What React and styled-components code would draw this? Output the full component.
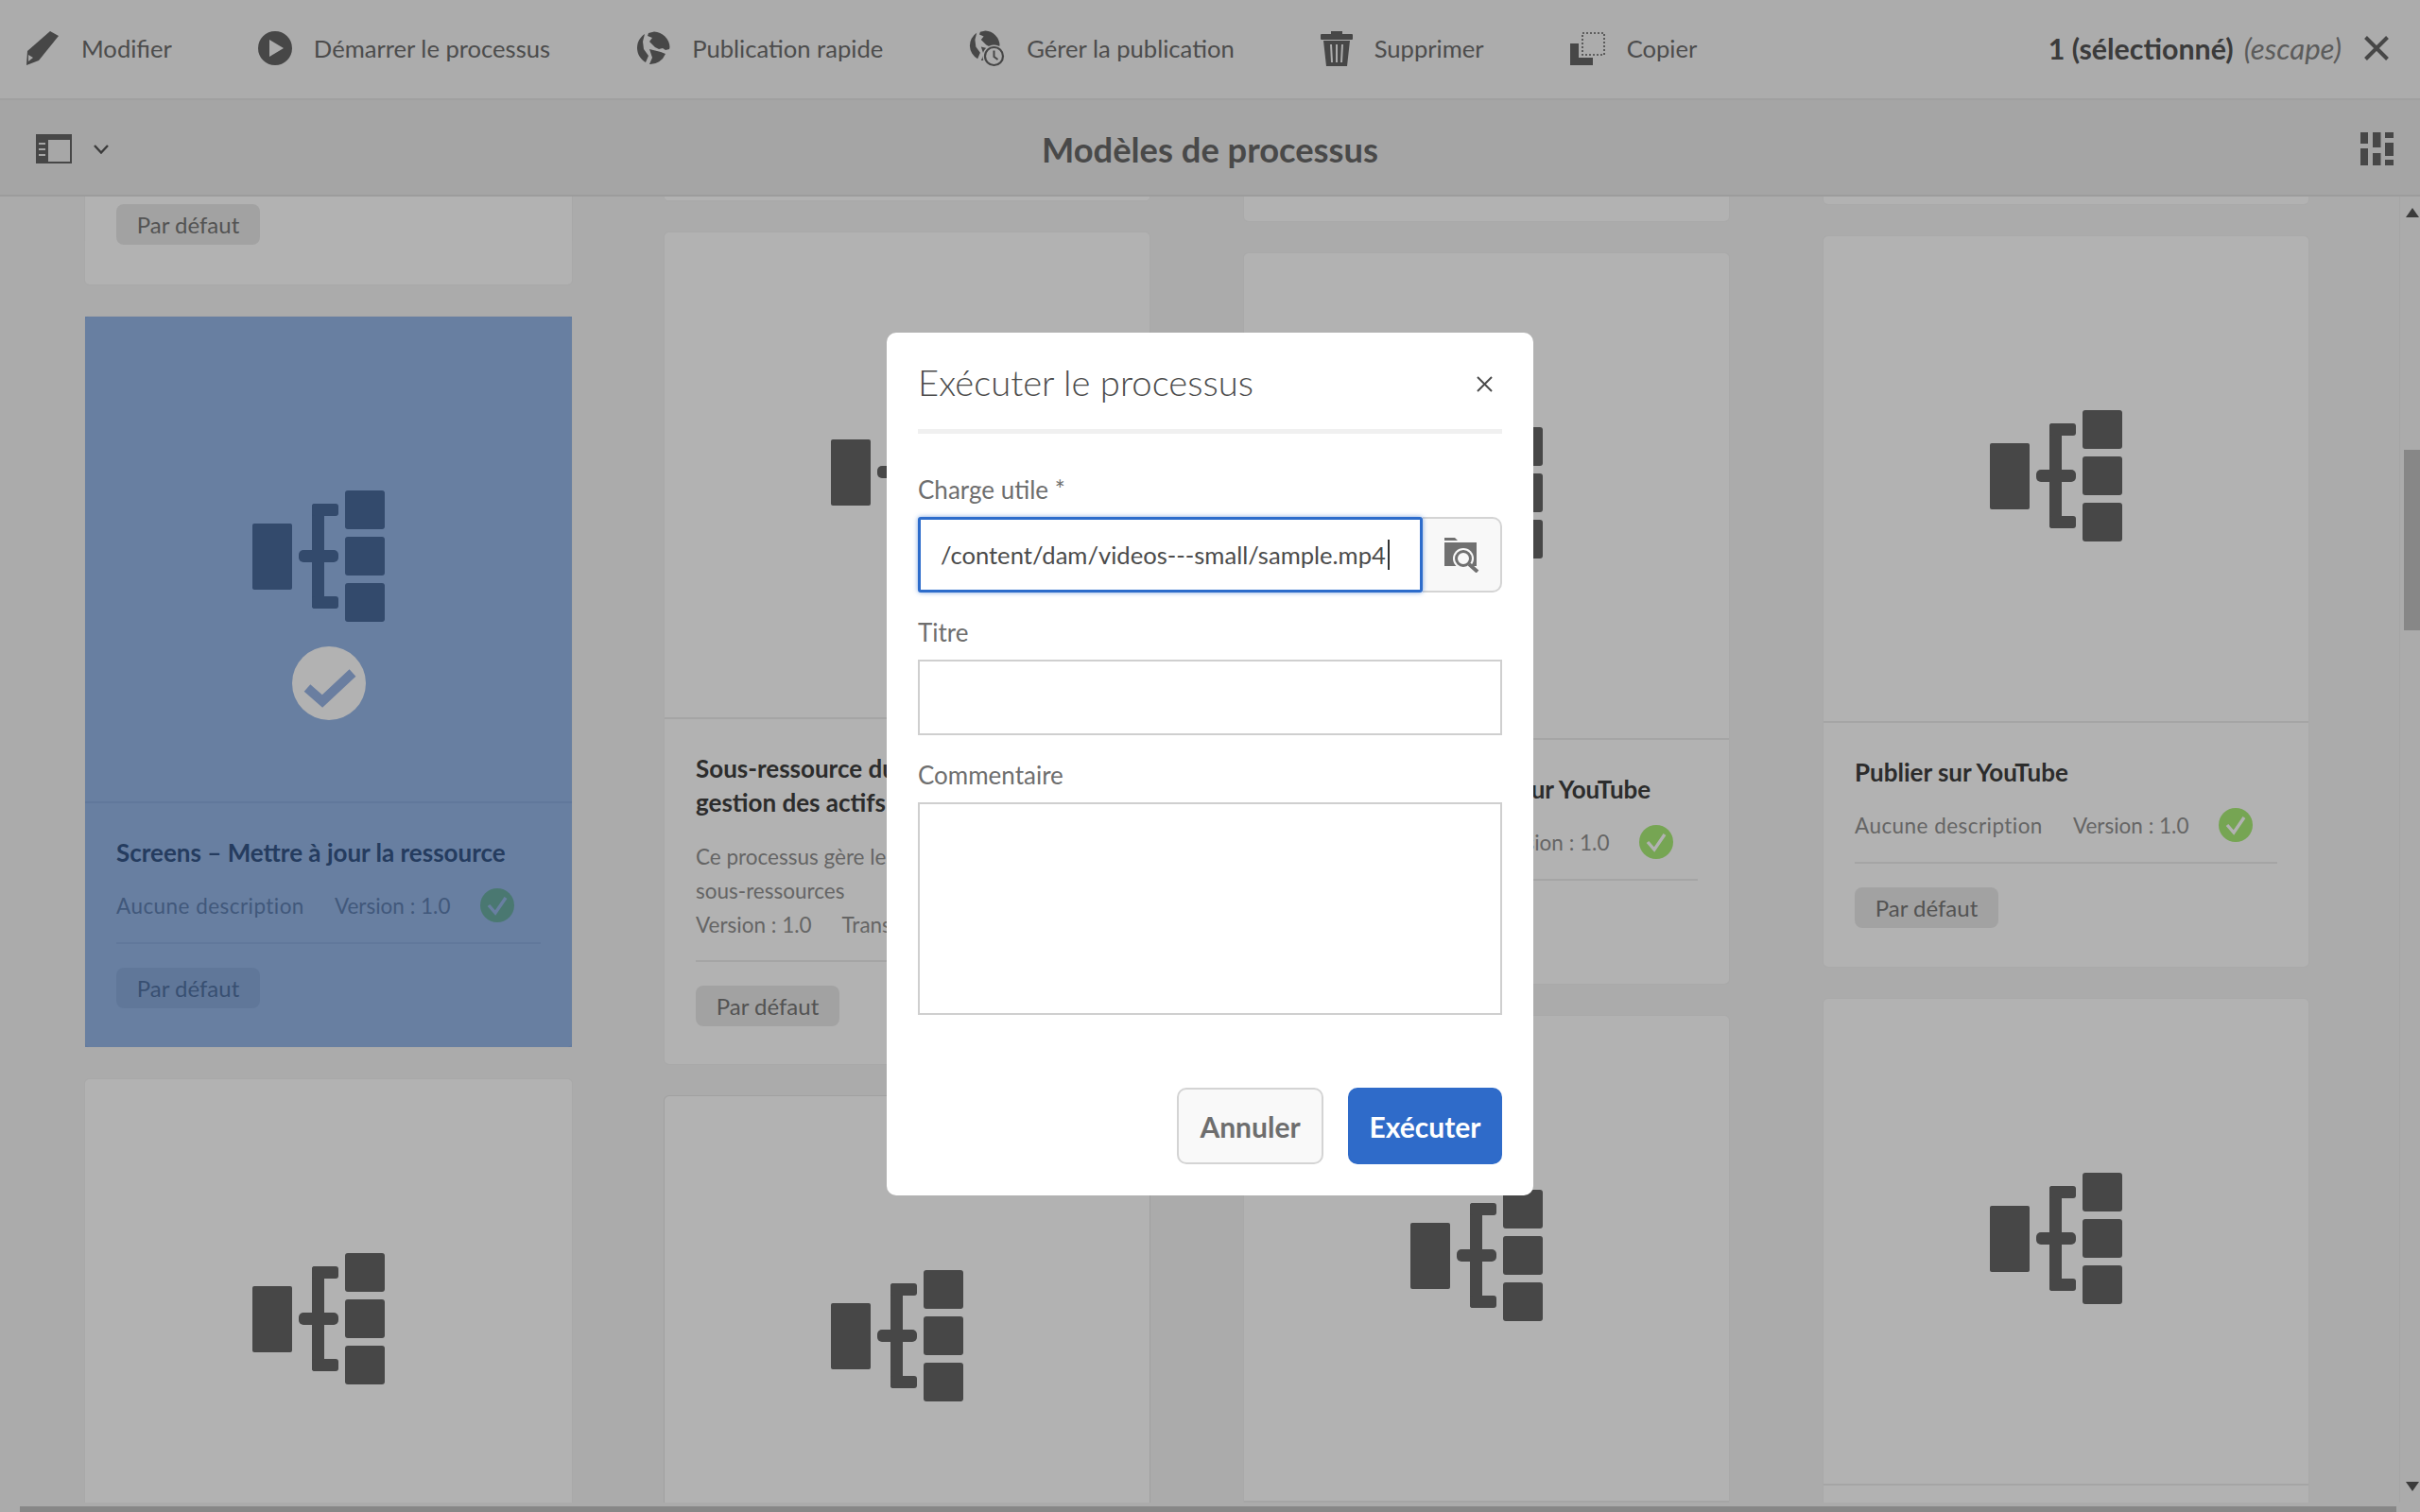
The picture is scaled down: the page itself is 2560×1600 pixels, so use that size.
import React from 'react'
import styled, { createGlobalStyle } from 'styled-components'

const GlobalStyle = createGlobalStyle`
    html, body {
        margin: 0;
        height: 100%;
        overflow: hidden;
        background: #f5f5f5;
        font-family: Lato, "Noto Sans", sans-serif;
    }
    * {
        box-sizing: border-box;
    }
`

const PencilIcon = () => (
    <svg width="36" height="36" viewBox="0 0 36 36">
        <path d="M26 0 L35 5 L14 31 L1 36 L2 21 Z" fill="#666" />
        <path d="M3 25 L8 28 L3 32 Z" fill="#f0f0f0" />
    </svg>
)

const PlayIcon = () => (
    <svg width="36" height="36" viewBox="0 0 36 36">
        <path
            fillRule="evenodd"
            d="M18 0a18 18 0 1 1 0 36a18 18 0 1 1 0-36z M12 9v18l15-9z"
            fill="#666"
        />
    </svg>
)

const GlobeIcon = ({ size = 36 }) => (
    <svg width={size} height={size} viewBox="0 0 36 36" fill="#666">
        <path d="M13 2 L19 0.5 A17.5 17.5 0 0 1 35.5 17 L35 19 L31 20 L28 18 L24 19 L20 17 L14 11 L17 7 L12 5 Z" />
        <path d="M9 3 A17.5 17.5 0 0 0 10 33 L13 26 L8 19 L7 11 Z" />
        <path d="M14 19 L26 22 L31 24 A17.5 17.5 0 0 1 14 35 L17 28 Z" />
    </svg>
)

const GlobeClock = styled.span`
    position: relative;
    display: block;
    width: 38px;
    height: 38px;
    svg {
        display: block;
    }
    svg + svg {
        position: absolute;
        right: -1px;
        bottom: -2px;
    }
`

const ManageIcon = () => (
    <GlobeClock>
        <GlobeIcon size={33} />
        <svg width="25" height="25" viewBox="0 0 25 25">
            <circle cx="12.5" cy="12.5" r="12" fill="#f6f6f6" />
            <circle cx="12.5" cy="12.5" r="9.5" fill="#f6f6f6" stroke="#666" strokeWidth="2.2" />
            <path d="M12.5 6.5v6.5l4 3" fill="none" stroke="#666" strokeWidth="2" />
        </svg>
    </GlobeClock>
)

const TrashIcon = () => (
    <svg width="34" height="37" viewBox="0 0 34 37">
        <path d="M11 0h12v4H11z" fill="#666" />
        <rect x="0" y="3" width="34" height="6" rx="1" fill="#666" />
        <path
            fillRule="evenodd"
            d="M3 10h28l-3 27H6z M10 14l1 19h2l-1-19z M16 14v19h2V14z M22 14l-1 19h2l1-19z"
            fill="#666"
        />
    </svg>
)

const CopyIcon = () => (
    <svg width="37" height="35" viewBox="0 0 37 35">
        <path d="M0 12h9v15h15v8H0z" fill="#666" />
        <rect x="13" y="1" width="23" height="23" fill="none" stroke="#666" strokeWidth="1.6" strokeDasharray="2 2" />
    </svg>
)

const CloseIcon = ({ size = 26, weight = 4, color = '#666' }) => (
    <svg width={size} height={size} viewBox="0 0 26 26">
        <path d="M1.5 1.5L24.5 24.5M24.5 1.5L1.5 24.5" stroke={color} strokeWidth={weight} fill="none" />
    </svg>
)

const RailIcon = () => (
    <svg width="38" height="31" viewBox="0 0 38 31">
        <rect x="0" y="0" width="38" height="31" fill="#666" />
        <rect x="13" y="6" width="23" height="23" fill="#f0f0f0" />
        <path d="M3 9h7v2H3zM3 15h7v2H3zM3 21h7v2H3z" fill="#f0f0f0" />
    </svg>
)

const ChevronIcon = () => (
    <svg width="16" height="10" viewBox="0 0 16 10">
        <path d="M1 1l7 7.5L15 1" fill="none" stroke="#555" strokeWidth="2.4" />
    </svg>
)

const MasonryIcon = () => (
    <svg width="35" height="35" viewBox="0 0 35 35" fill="#666">
        <path d="M0 0h8v12H0zM0 17h8v18H0z" />
        <path d="M13 0h8.5v16H13zM13 22h8.5v13H13z" />
        <path d="M26 0h9v6h-9zM26 11h9v14h-9zM26 29h9v6h-9z" />
    </svg>
)

const WorkflowIcon = () => (
    <svg width="140" height="139" viewBox="0 0 140 139" fill="#666">
        <rect x="0" y="35" width="42" height="70" rx="2" />
        <rect x="98" y="0" width="42" height="41" rx="3" />
        <rect x="98" y="49" width="42" height="41" rx="3" />
        <rect x="98" y="98" width="42" height="41" rx="3" />
        <rect x="63" y="14" width="13" height="111" rx="3" />
        <rect x="63" y="14" width="28" height="13" rx="3" />
        <rect x="49" y="63" width="42" height="13" rx="5" />
        <rect x="63" y="112" width="28" height="13" rx="3" />
    </svg>
)

const ValidIcon = () => (
    <svg width="36" height="36" viewBox="0 0 36 36">
        <circle cx="18" cy="18" r="18" fill="#a9ec77" />
        <path d="M9 18l7 8L27 10" fill="none" stroke="#fff" strokeWidth="3.4" />
    </svg>
)

const SelectedCheck = () => (
    <svg width="78" height="78" viewBox="-39 -39 78 78">
        <circle r="39" fill="#fff" />
        <path d="M-23 5L-7 19L25 -11" fill="none" stroke="#99b5e6" strokeWidth="10" />
    </svg>
)

const FolderSearchIcon = () => (
    <svg width="38" height="37" viewBox="0 0 38 37">
        <path d="M0 0h11l3 3H0z" fill="#707070" />
        <path d="M0 5h34v25H0z" fill="#707070" />
        <circle cx="20" cy="22" r="11" fill="#f8f8f8" />
        <circle cx="20" cy="22" r="7.5" fill="#f8f8f8" stroke="#707070" strokeWidth="3" />
        <path d="M26 28l9 8" stroke="#707070" strokeWidth="4" />
    </svg>
)

const actions = [
    { label: 'Modifier', icon: <PencilIcon /> },
    { label: 'Démarrer le processus', icon: <PlayIcon /> },
    { label: 'Publication rapide', icon: <GlobeIcon /> },
    { label: 'Gérer la publication', icon: <ManageIcon /> },
    { label: 'Supprimer', icon: <TrashIcon /> },
    { label: 'Copier', icon: <CopyIcon /> },
]

const columns = [
    {
        wide: true,
        stub: { height: 94, badge: true },
        cards: [
            { selected: true, title: 'Screens – Mettre à jour la ressource', version: true, badge: true },
            {},
        ],
    },
    {
        stub: { height: 5 },
        cards: [
            {
                title: 'Sous-ressource du processus de gestion des actifs',
                description: ['Ce processus gère les ressources des', 'sous-ressources'],
                transient: true,
                badge: true,
            },
            { outlined: true },
        ],
    },
    {
        stub: { height: 27 },
        cards: [
            { title: 'Annuler la publication sur YouTube', version: true, badge: true },
            {},
        ],
    },
    {
        stub: { height: 9 },
        cards: [
            { title: 'Publier sur YouTube', version: true, badge: true },
            {},
        ],
    },
]

const Card = ({ selected, outlined, title, description, version, transient, badge }) => (
    <CardBox $outlined={outlined}>
        <Thumb>
            <WorkflowIcon />
        </Thumb>
        {title && (
            <CardBody>
                <CardTitle>{title}</CardTitle>
                {version && (
                    <Meta>
                        <span>Aucune description</span>
                        <span>Version : 1.0</span>
                        <ValidIcon />
                    </Meta>
                )}
                {description && (
                    <Description>
                        {description.map(line => (
                            <div key={line}>{line}</div>
                        ))}
                        <DescriptionLine>
                            <span>Version : 1.0</span>
                            {transient && <span>Transitoire</span>}
                        </DescriptionLine>
                    </Description>
                )}
                <Rule $tight={!!description} />
                {badge && <Badge>Par défaut</Badge>}
            </CardBody>
        )}
        {selected && (
            <Tint>
                <SelectedCheck />
            </Tint>
        )}
    </CardBox>
)

const App = () => (
    <>
        <GlobalStyle />
        <Page>
            <ActionBar>
                <Actions>
                    {actions.map(({ label, icon }) => (
                        <Action key={label}>
                            {icon}
                            {label}
                        </Action>
                    ))}
                </Actions>
                <Selection>
                    <strong>1 (sélectionné)</strong>
                    <em>(escape)</em>
                    <CloseIcon />
                </Selection>
            </ActionBar>
            <TitleBar>
                <RailToggle>
                    <RailIcon />
                    <ChevronIcon />
                </RailToggle>
                <PageTitle>Modèles de processus</PageTitle>
                <ViewSwitch>
                    <MasonryIcon />
                </ViewSwitch>
            </TitleBar>
            <Main>
                <Scroller>
                    {columns.map(({ wide, stub, cards }, i) => (
                        <Column key={i} $wide={wide}>
                            <Stub $height={stub.height} $badge={stub.badge}>
                                {stub.badge && <Badge>Par défaut</Badge>}
                            </Stub>
                            {cards.map((card, j) => (
                                <Card key={j} {...card} />
                            ))}
                        </Column>
                    ))}
                </Scroller>
                <VerticalBar>
                    <Arrow />
                    <Thumbnail />
                    <Arrow $down />
                </VerticalBar>
            </Main>
            <HorizontalBar>
                <HorizontalThumb />
            </HorizontalBar>
        </Page>
        <Backdrop>
            <Dialog>
                <DialogHeader>
                    <DialogTitle>Exécuter le processus</DialogTitle>
                    <CloseIcon size={17} weight={3} color="#4b4b4b" />
                </DialogHeader>
                <Field>
                    <Label>Charge utile *</Label>
                    <PathField>
                        <PathInput>
                            /content/dam/videos---small/sample.mp4
                            <Caret />
                        </PathInput>
                        <BrowseButton>
                            <FolderSearchIcon />
                        </BrowseButton>
                    </PathField>
                </Field>
                <Field>
                    <Label>Titre</Label>
                    <TextInput />
                </Field>
                <Field>
                    <Label>Commentaire</Label>
                    <TextArea />
                </Field>
                <DialogFooter>
                    <Button>Annuler</Button>
                    <Button $primary>Exécuter</Button>
                </DialogFooter>
            </Dialog>
        </Backdrop>
    </>
)

const Page = styled.div`
    display: flex;
    flex-direction: column;
    width: 2560px;
    height: 1600px;
    overflow: hidden;
    background: #f5f5f5;
`

const ActionBar = styled.header`
    display: flex;
    align-items: center;
    justify-content: space-between;
    flex: 0 0 106px;
    padding: 0 33px 2px 27px;
    background: #f6f6f6;
    border-bottom: 2px solid #e6e6e6;
`

const Actions = styled.div`
    display: flex;
    align-items: center;
    gap: 91px;
`

const Action = styled.div`
    display: flex;
    align-items: center;
    gap: 23px;
    font-size: 25.6px;
    color: #6e6e6e;
`

const Selection = styled.div`
    display: flex;
    align-items: center;
    font-size: 30.4px;
    color: #555;

    strong {
        font-weight: 700;
        margin-right: 11px;
    }
    em {
        font-size: 31.2px;
        color: #848484;
        margin-right: 24px;
    }
`

const TitleBar = styled.div`
    display: grid;
    grid-template-columns: 1fr auto 1fr;
    align-items: center;
    flex: 0 0 102px;
    padding: 3px 28px 0 28px;
    background: #ededed;
    border-bottom: 2px solid #e0e0e0;
`

const RailToggle = styled.div`
    display: flex;
    align-items: center;
    gap: 23px;
    padding-left: 10px;
`

const PageTitle = styled.h1`
    margin: 0;
    font-size: 36.3px;
    font-weight: 700;
    color: #696969;
`

const ViewSwitch = styled.div`
    display: flex;
    justify-content: flex-end;
`

const Main = styled.div`
    display: flex;
    flex: 1;
    min-height: 0;
`

const Scroller = styled.div`
    flex: 1;
    display: grid;
    grid-template-columns: repeat(4, 613px);
    padding-left: 89px;
    overflow: hidden;
`

const Column = styled.div`
    display: flex;
    flex-direction: column;
    gap: 32px;
    width: ${({ $wide }) => ($wide ? 517 : 515)}px;
`

const Stub = styled.div`
    flex: 0 0 ${({ $height }) => $height}px;
    display: flex;
    align-items: flex-end;
    padding: ${({ $badge }) => ($badge ? '0 33px 42px' : '0')};
    background: #fff;
    border: 1px solid rgba(0, 0, 0, 0.05);
    border-top: 0;
    border-radius: 0 0 6px 6px;
`

const CardBox = styled.article`
    position: relative;
    flex: 0 0 auto;
    min-height: 775px;
    background: #fff;
    border: 1px solid ${({ $outlined }) => ($outlined ? 'rgba(0, 0, 0, 0.1)' : 'rgba(0, 0, 0, 0.05)')};
    border-radius: 6px;
`

const Thumb = styled.div`
    display: flex;
    justify-content: center;
    height: 515px;
    padding: 184px 22px 0 0;
    border-bottom: 2px solid rgba(0, 0, 0, 0.07);
`

const CardBody = styled.div`
    display: flex;
    flex-direction: column;
    align-items: flex-start;
    padding: 34px 33px 40px;
`

const CardTitle = styled.h2`
    margin: 0;
    font-size: 26px;
    line-height: 36px;
    font-weight: 700;
    color: #404040;
`

const Meta = styled.div`
    display: flex;
    align-items: center;
    gap: 32px;
    margin-top: 20px;
    height: 36px;
    font-size: 22.5px;
    white-space: nowrap;
    color: #919191;

    span:first-child {
        letter-spacing: 0.45px;
    }
`

const Description = styled.div`
    margin-top: 22px;
    font-size: 22.5px;
    line-height: 36px;
    white-space: nowrap;
    color: #919191;
`

const DescriptionLine = styled.div`
    display: flex;
    gap: 32px;
`

const Rule = styled.div`
    align-self: stretch;
    height: 2px;
    margin: ${({ $tight }) => ($tight ? 19 : 21)}px 0 25px;
    background: rgba(0, 0, 0, 0.07);
`

const Badge = styled.span`
    display: inline-flex;
    align-items: center;
    justify-content: center;
    width: 152px;
    height: 43px;
    font-size: 24px;
    color: #777;
    background: #e9e9e9;
    border-radius: 8px;
`

const Tint = styled.div`
    position: absolute;
    inset: 0;
    padding-top: 349px;
    display: flex;
    justify-content: center;
    align-items: flex-start;
    background: rgba(44, 110, 207, 0.5);
`

const VerticalBar = styled.div`
    flex: 0 0 22px;
    display: flex;
    flex-direction: column;
    align-items: center;
    padding: 12px 0 12px 4px;
    border-left: 1px solid rgba(0, 0, 0, 0.03);
`

const Arrow = styled.div`
    width: 0;
    height: 0;
    border-left: 7px solid transparent;
    border-right: 7px solid transparent;
    ${({ $down }) => ($down ? 'border-top: 10px solid #555; margin-top: auto;' : 'border-bottom: 10px solid #555;')}
`

const Thumbnail = styled.div`
    align-self: stretch;
    height: 191px;
    margin: 246px -1px 0 0;
    background: #c2c2c2;
`

const HorizontalBar = styled.div`
    flex: 0 0 10px;
    padding: 4px 25px 0 21px;
`

const HorizontalThumb = styled.div`
    height: 6px;
    background: #c2c2c2;
`

const Backdrop = styled.div`
    position: fixed;
    inset: 0;
    display: flex;
    justify-content: center;
    align-items: flex-start;
    padding-top: 352px;
    background: rgba(0, 0, 0, 0.3);
`

const Dialog = styled.section`
    display: flex;
    flex-direction: column;
    width: 684px;
    height: 913px;
    padding: 0 33px 33px;
    background: #fff;
    border-radius: 10px;
`

const DialogHeader = styled.div`
    display: flex;
    align-items: center;
    justify-content: space-between;
    height: 107px;
    padding: 6px 10px 0 0;
    border-bottom: 5px solid #f0f0f0;
    margin-bottom: 41px;
`

const DialogTitle = styled.h2`
    margin: -4px 0 0;
    font-size: 38.2px;
    font-weight: 300;
    color: #4b4b4b;
`

const Field = styled.div`
    display: flex;
    flex-direction: column;
    margin-bottom: 24px;
`

const Label = styled.label`
    height: 47px;
    font-size: 26px;
    line-height: 36px;
    color: #6e6e6e;
`

const PathField = styled.div`
    display: flex;
    height: 80px;
`

const PathInput = styled.div`
    flex: 1;
    display: flex;
    align-items: center;
    padding-left: 21px;
    font-size: 25.6px;
    color: #4b4b4b;
    background: #fff;
    border: 3px solid #2d6ccb;
    border-radius: 3px;
    box-shadow: 0 0 5px rgba(45, 108, 203, 0.6);
    z-index: 1;
`

const Caret = styled.span`
    width: 2px;
    height: 32px;
    margin-left: 2px;
    background: #333;
`

const BrowseButton = styled.button`
    flex: 0 0 84px;
    display: flex;
    align-items: center;
    justify-content: center;
    padding: 0 0 0 2px;
    background: #f8f8f8;
    border: 2px solid #d4d4d4;
    border-left: 0;
    border-radius: 0 10px 10px 0;
`

const TextInput = styled.input`
    height: 80px;
    background: #fff;
    border: 2px solid #cfcfcf;
    border-radius: 0;
    outline: none;
`

const TextArea = styled.textarea`
    height: 225px;
    background: #fff;
    border: 2px solid #cfcfcf;
    border-radius: 0;
    outline: none;
    resize: none;
`

const DialogFooter = styled.div`
    display: flex;
    justify-content: flex-end;
    gap: 26px;
    margin-top: auto;
`

const Button = styled.button`
    width: ${({ $primary }) => ($primary ? 163 : 155)}px;
    height: 81px;
    padding: 0;
    font-family: inherit;
    font-size: 30px;
    font-weight: 700;
    color: ${({ $primary }) => ($primary ? '#fff' : '#6e6e6e')};
    background: ${({ $primary }) => ($primary ? '#2f6bc9' : '#f9f9f9')};
    border: 2px solid ${({ $primary }) => ($primary ? '#2f6bc9' : '#d4d4d4')};
    border-radius: 10px;
`

export default App
